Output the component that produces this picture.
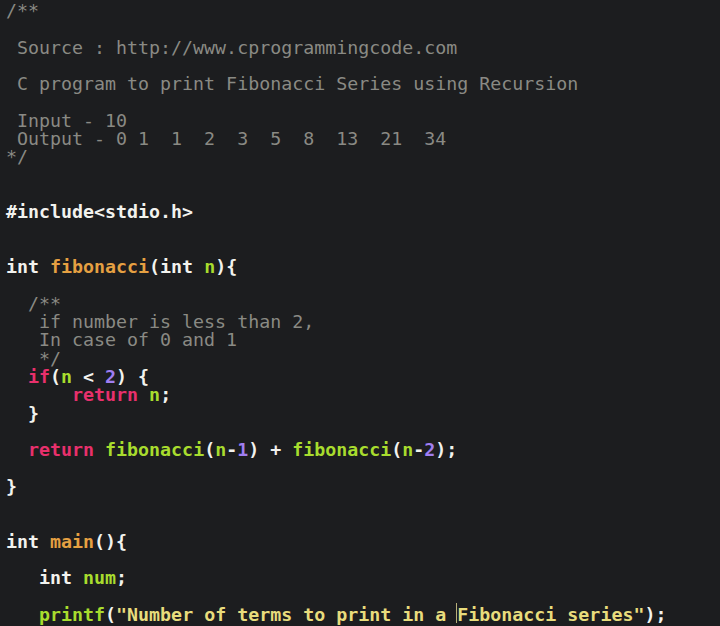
import React from "react";

const W = ({ children }) => <span className="text-[#f2f2ee]">{children}</span>;
const P = ({ children }) => <span className="text-[#e8306c]">{children}</span>;
const G = ({ children }) => <span className="text-[#a8dc2e]">{children}</span>;
const O = ({ children }) => <span className="text-[#e5a042]">{children}</span>;
const V = ({ children }) => <span className="text-[#a07ef0]">{children}</span>;
const Y = ({ children }) => <span className="text-[#e8dc7c]">{children}</span>;
const C = ({ children }) => <span className="font-normal text-[#8a8a84]">{children}</span>;

const Line = ({ children }) => (
  <div className="h-[18.3px] whitespace-pre">{children === undefined ? " " : children}</div>
);

export default function App() {
  return (
    <div className="w-[720px] h-[626px] overflow-hidden bg-[#1c1d1f]">
      <div
        className="pl-[6px] pt-[2px] text-[18.3px] leading-[18.3px] font-bold text-[#f2f2ee]"
        style={{ fontFamily: '"DejaVu Sans Mono", "Liberation Mono", monospace' }}
      >
        <Line><C>{"/**"}</C></Line>
        <Line />
        <Line><C>{" Source : http://www.cprogrammingcode.com"}</C></Line>
        <Line />
        <Line><C>{" C program to print Fibonacci Series using Recursion"}</C></Line>
        <Line />
        <Line><C>{" Input - 10"}</C></Line>
        <Line><C>{" Output - 0 1  1  2  3  5  8  13  21  34"}</C></Line>
        <Line><C>{"*/"}</C></Line>
        <Line />
        <Line />
        <Line><W>{"#include<stdio.h>"}</W></Line>
        <Line />
        <Line />
        <Line><W>{"int "}</W><O>{"fibonacci"}</O><W>{"(int "}</W><G>{"n"}</G><W>{"){"}</W></Line>
        <Line />
        <Line><C>{"  /**"}</C></Line>
        <Line><C>{"   if number is less than 2,"}</C></Line>
        <Line><C>{"   In case of 0 and 1"}</C></Line>
        <Line><C>{"   */"}</C></Line>
        <Line>{"  "}<P>{"if"}</P><W>{"("}</W><G>{"n"}</G><W>{" < "}</W><V>{"2"}</V><W>{") {"}</W></Line>
        <Line>{"      "}<P>{"return"}</P>{" "}<G>{"n"}</G><W>{";"}</W></Line>
        <Line>{"  "}<W>{"}"}</W></Line>
        <Line />
        <Line>{"  "}<P>{"return"}</P>{" "}<G>{"fibonacci"}</G><W>{"("}</W><G>{"n"}</G><W>{"-"}</W><V>{"1"}</V><W>{") + "}</W><G>{"fibonacci"}</G><W>{"("}</W><G>{"n"}</G><W>{"-"}</W><V>{"2"}</V><W>{");"}</W></Line>
        <Line />
        <Line><W>{"}"}</W></Line>
        <Line />
        <Line />
        <Line><W>{"int "}</W><O>{"main"}</O><W>{"(){"}</W></Line>
        <Line />
        <Line>{"   "}<W>{"int "}</W><G>{"num"}</G><W>{";"}</W></Line>
        <Line />
        <Line>
          {"   "}<G>{"printf"}</G><W>{"("}</W><Y>{"\"Number of terms to print in a "}</Y>
          <span className="relative">
            <span className="absolute left-[-1px] top-[-1px] h-[20px] w-[1px] bg-[#b8b07a]" />
            <Y>{"Fibonacci series\""}</Y>
          </span>
          <W>{");"}</W>
        </Line>
      </div>
    </div>
  );
}
